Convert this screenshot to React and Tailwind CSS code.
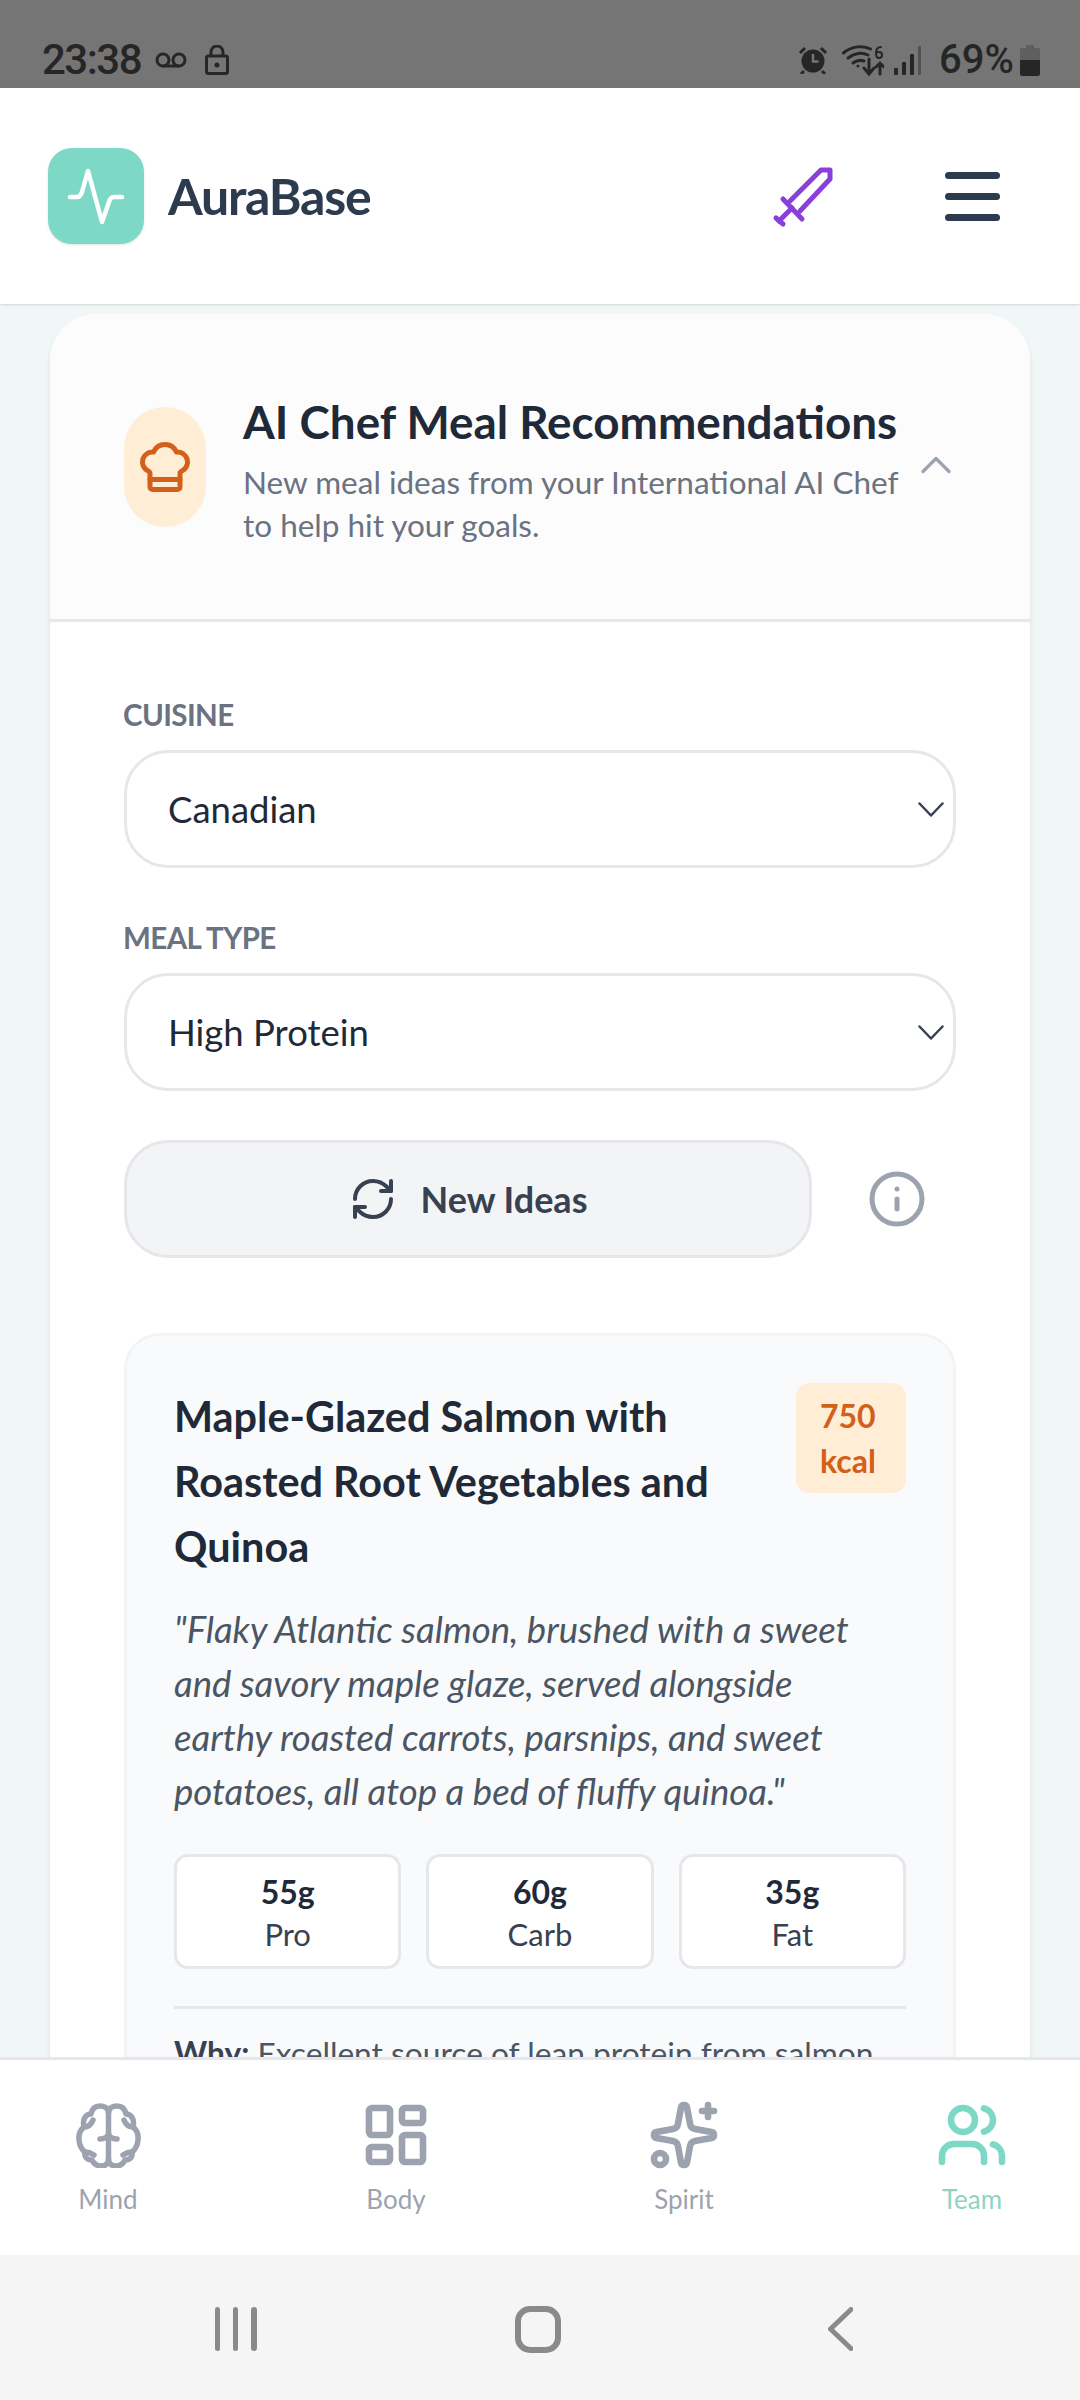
import { ChefHat, ChevronUp, RefreshCw, Info, LayoutDashboard, Sparkles, Users } from 'lucide-react';

const font = { fontFamily: 'Lato, "Noto Sans", sans-serif' };

function StatusBar() {
  return (
    <div className="h-[88px] bg-[#757575] pt-[32px] pl-[42px] pr-[40px] flex items-center justify-between text-[#262626] font-['Roboto',sans-serif]">
      <div className="flex items-center">
        <span className="text-[42px] leading-none font-medium tracking-[-1.5px]">23:38</span>
        <svg className="ml-[14px]" width="32" height="16" viewBox="0 0 32 16" fill="none" stroke="currentColor" strokeWidth="3">
          <circle cx="8" cy="8" r="6" />
          <circle cx="24" cy="8" r="6" />
          <path d="M8 14h16" />
        </svg>
        <svg className="ml-[18px]" width="24" height="30" viewBox="0 0 24 30" fill="none" stroke="currentColor" strokeWidth="3">
          <rect x="1.5" y="11" width="21" height="17.5" rx="2" />
          <path d="M6 11V7a6 6 0 0 1 12 0v4" />
          <circle cx="12" cy="20" r="2.5" fill="currentColor" stroke="none" />
        </svg>
      </div>
      <div className="flex items-center">
        <svg width="30" height="28" viewBox="0 0 30 28" fill="currentColor">
          <circle cx="15" cy="15" r="11.5" />
          <path d="M15 8v7.5h5.5" stroke="#757575" strokeWidth="2.5" fill="none" />
          <path d="M2 7l5-5M28 7l-5-5M6 25l-3 3M24 25l3 3" stroke="currentColor" strokeWidth="3" />
        </svg>
        <svg className="ml-[14px]" width="42" height="32" viewBox="0 0 42 32" fill="none" stroke="currentColor" strokeWidth="3" strokeLinecap="round">
          <path d="M1.5 9c8-7 20-8 27-4" />
          <path d="M6 14c6-5 14-6 20-3" />
          <path d="M11 19c4-3 8-3 11-2" />
          <circle cx="16" cy="22" r="1.5" fill="currentColor" stroke="none" />
          <path d="M27 15v14M22 24l5 6 5-6" />
          <path d="M38 30V19M34 23l4-4 4 4" />
          <path d="M39 3c-3 0-5 2-5 6s1 5 3 5 3-1 3-3-1-3-3-3-3 1-3 2" strokeWidth="2" />
        </svg>
        <svg className="ml-[10px]" width="27" height="29" viewBox="0 0 27 29" fill="currentColor">
          <rect x="0" y="22" width="4" height="7" rx="1" />
          <rect x="8" y="16" width="4" height="13" rx="1" />
          <rect x="16" y="8" width="4" height="21" rx="1" />
          <rect x="24" y="0" width="3" height="29" rx="1" opacity="0.45" />
        </svg>
        <span className="ml-[18px] text-[40px] leading-none font-medium">69%</span>
        <svg className="ml-[6px]" width="20" height="31" viewBox="0 0 20 31">
          <path d="M6 0h8v3h4a2 2 0 0 1 2 2v10H0V5a2 2 0 0 1 2-2h4z" fill="#5f5f5f" />
          <path d="M0 15h20v14a2 2 0 0 1-2 2H2a2 2 0 0 1-2-2z" fill="#262626" />
        </svg>
      </div>
    </div>
  );
}

function Header() {
  return (
    <header className="h-[216px] shrink-0 bg-white shadow-sm flex items-center justify-between pl-[48px] pr-[80px] relative z-10">
      <div className="flex items-center">
        <div className="w-[96px] h-[96px] rounded-[24px] bg-[#7dd8c6] shadow-sm flex items-center justify-center">
          <svg width="60" height="60" viewBox="0 0 60 60" fill="none" stroke="white" strokeWidth="4.5" strokeLinecap="round" strokeLinejoin="round">
            <path d="M4 31h7c3 0 4-2 5-5L22 5L36 56L43 36C44 32 46 31 48 31h8" />
          </svg>
        </div>
        <span className="ml-[24px] text-[50px] font-bold text-[#2d3b4e] tracking-[-1.2px]">AuraBase</span>
      </div>
      <div className="flex items-center">
        <svg width="70" height="70" viewBox="0 0 70 70" fill="none" stroke="#8b3fd9" strokeWidth="5" strokeLinecap="round" strokeLinejoin="round">
          <path d="M20 40L51 9h9v9L30 50" />
          <path d="M13 38l19 20" />
          <path d="M6 57l7 6" />
          <path d="M9 60l13-13" />
        </svg>
        <div className="ml-[105px] flex flex-col gap-[14px]">
          <div className="w-[55px] h-[7px] rounded-full bg-[#2d3b4e]" />
          <div className="w-[55px] h-[7px] rounded-full bg-[#2d3b4e]" />
          <div className="w-[55px] h-[7px] rounded-full bg-[#2d3b4e]" />
        </div>
      </div>
    </header>
  );
}

function Field({ label, value, className }) {
  return (
    <div className={className}>
      <div className="-ml-[1px] text-[29.5px] leading-[40px] font-bold text-[#6b7280] tracking-[-0.6px] mb-[15px]">{label}</div>
      <div className="h-[118px] rounded-[44px] border-[3px] border-[#e5e7eb] bg-white pl-[41px] pr-[9px] flex items-center justify-between">
        <span className="text-[36.5px] text-[#1f2937]">{value}</span>
        <svg width="26" height="15" viewBox="0 0 26 15" fill="none" stroke="#374151" strokeWidth="2.5" strokeLinecap="round" strokeLinejoin="round">
          <path d="M1.5 1.5L13 13.5L24.5 1.5" />
        </svg>
      </div>
    </div>
  );
}

function Macro({ value, label }) {
  return (
    <div className="h-[115px] pt-[2px] rounded-[14px] border-[3px] border-[#e5e7eb] bg-white flex flex-col items-center justify-center">
      <div className="text-[32px] leading-[42px] font-bold text-[#1f2937]">{value}</div>
      <div className="text-[31px] leading-[42px] text-[#374151]">{label}</div>
    </div>
  );
}

function BrainIcon() {
  return (
    <svg width="65" height="65" viewBox="0 0 65 65" fill="none" stroke="currentColor" strokeWidth="5.5" strokeLinecap="round" strokeLinejoin="round">
      <path d="M32.5 10C32.5 5 28 3 24 3C19 3 16 6 15 11C10 11 6 16 8 24C4 27 2.5 32 3 37C3.5 42 5 46 9 49C8 54 11 57 16 57C18 61 21 63 25 63C30 63 32.5 60 32.5 56V10Z" />
      <path d="M32.5 10C32.5 5 37 3 41 3C46 3 49 6 50 11C55 11 59 16 57 24C61 27 62.5 32 62 37C61.5 42 60 46 56 49C57 54 54 57 49 57C47 61 44 63 40 63C35 63 32.5 60 32.5 56" />
      <path d="M24 36C28 36 32.5 34 32.5 30C32.5 34 37 36 41 36" />
      <path d="M8 24C12 24 15 22 17 17M57 24C53 24 50 22 48 17" />
      <path d="M9 49C12 49 15 50 18 52M56 49C53 49 50 50 47 52" />
    </svg>
  );
}

function NavItem({ icon, label, active }) {
  return (
    <div className={`w-[216px] flex flex-col items-center ${active ? 'text-[#7dd8c6]' : 'text-[#9ca3af]'}`}>
      <div className="h-[72px] flex items-center justify-center">{icon}</div>
      <span className={`mt-[8px] text-[26px] leading-[40px] ${active ? 'text-[#8fd4c2]' : ''}`}>{label}</span>
    </div>
  );
}

export default function App() {
  return (
    <div className="h-[2400px] w-[1080px] flex flex-col overflow-hidden bg-[#f0f7f6]" style={font}>
      <StatusBar />
      <Header />
      <main className="flex-1 min-h-0 overflow-hidden px-[50px] pt-[10px]">
        <div className="rounded-t-[46px] bg-white shadow-md overflow-hidden">
          <div className="h-[308px] bg-[#fcfcfd] border-b-[3px] border-[#e5e7eb] pl-[74px] pr-[68px] flex items-center">
            <div className="w-[82px] h-[120px] rounded-full bg-[#ffedd5] flex items-center justify-center shrink-0">
              <ChefHat size={60} strokeWidth={2} className="text-[#d2601a]" />
            </div>
            <div className="ml-[37px] flex-1 pt-[5px]">
              <h2 className="text-[45.8px] leading-[60px] font-bold text-[#1f2937]">AI Chef Meal Recommendations</h2>
              <p className="mt-[9px] text-[31.5px] leading-[43px] text-[#6b7280]">New meal ideas from your International AI Chef<br />to help hit your goals.</p>
            </div>
            <ChevronUp size={52} strokeWidth={1.5} className="text-[#9ca3af] shrink-0 mb-[4px]" />
          </div>
          <div className="px-[74px] pt-[73px]">
            <Field label="CUISINE" value="Canadian" />
            <Field label="MEAL TYPE" value="High Protein" className="mt-[50px]" />
            <div className="mt-[49px] flex items-center">
              <button className="w-[688px] h-[118px] rounded-[44px] border-[3px] border-[#e5e7eb] bg-[#f3f4f6] flex items-center justify-center gap-[24px] text-[#374151]">
                <RefreshCw size={48} strokeWidth={2} />
                <span className="text-[36px] font-bold">New Ideas</span>
              </button>
              <Info size={60} strokeWidth={2} className="ml-[55px] text-[#9ca3af]" />
            </div>
            <div className="mt-[75px] rounded-t-[36px] border-[3px] border-[#f3f4f6] bg-[#f9fafb] px-[47px] pt-[48px] h-[800px]">
              <div className="flex justify-between items-start">
                <h3 className="text-[41.4px] leading-[65px] font-bold text-[#1f2937]">Maple-Glazed Salmon with<br />Roasted Root Vegetables and<br />Quinoa</h3>
                <div className="w-[110px] h-[110px] -mt-[1px] rounded-[14px] bg-[#ffedd5] pl-[24px] flex items-center text-[32px] leading-[45px] font-bold text-[#d2601a]">750<br />kcal</div>
              </div>
              <p className="mt-[23px] text-[36.6px] leading-[54px] italic text-[#4b5563]">"Flaky Atlantic salmon, brushed with a sweet<br />and savory maple glaze, served alongside<br />earthy roasted carrots, parsnips, and sweet<br />potatoes, all atop a bed of fluffy quinoa."</p>
              <div className="mt-[36px] grid grid-cols-3 gap-[25px]">
                <Macro value="55g" label="Pro" />
                <Macro value="60g" label="Carb" />
                <Macro value="35g" label="Fat" />
              </div>
              <div className="mt-[37px] border-t-[3px] border-[#e5e7eb] pt-[22px] text-[31.7px] leading-[45px] text-[#4b5563]">
                <b className="font-bold text-[#374151]">Why:</b> Excellent source of lean protein from salmon
              </div>
            </div>
          </div>
        </div>
      </main>
      <nav className="h-[198px] shrink-0 bg-white border-t-[3px] border-[#e5e7eb] flex justify-between pt-[39px] relative z-10">
        <NavItem label="Mind" icon={<BrainIcon />} />
        <NavItem label="Body" icon={<LayoutDashboard size={72} strokeWidth={2.2} />} />
        <NavItem label="Spirit" icon={<Sparkles size={72} strokeWidth={2.2} />} />
        <NavItem label="Team" active icon={<Users size={72} strokeWidth={2.2} />} />
      </nav>
      <div className="h-[145px] shrink-0 pt-[3px] bg-[#f5f5f5] flex items-center text-[#8a8a8a]">
        <div className="ml-[215px] flex gap-[13px]">
          <div className="w-[5px] h-[44px] rounded-full bg-[#8a8a8a]" />
          <div className="w-[5px] h-[44px] rounded-full bg-[#8a8a8a]" />
          <div className="w-[6px] h-[44px] rounded-full bg-[#8a8a8a]" />
        </div>
        <div className="ml-[258px] w-[46px] h-[47px] rounded-[15px] border-[6px] border-[#8a8a8a]" />
        <svg className="ml-[267px]" width="25" height="44" viewBox="0 0 25 44" fill="none" stroke="currentColor" strokeWidth="5" strokeLinecap="round" strokeLinejoin="round">
          <path d="M23 2.5L2.5 22L23 41.5" />
        </svg>
      </div>
    </div>
  );
}
